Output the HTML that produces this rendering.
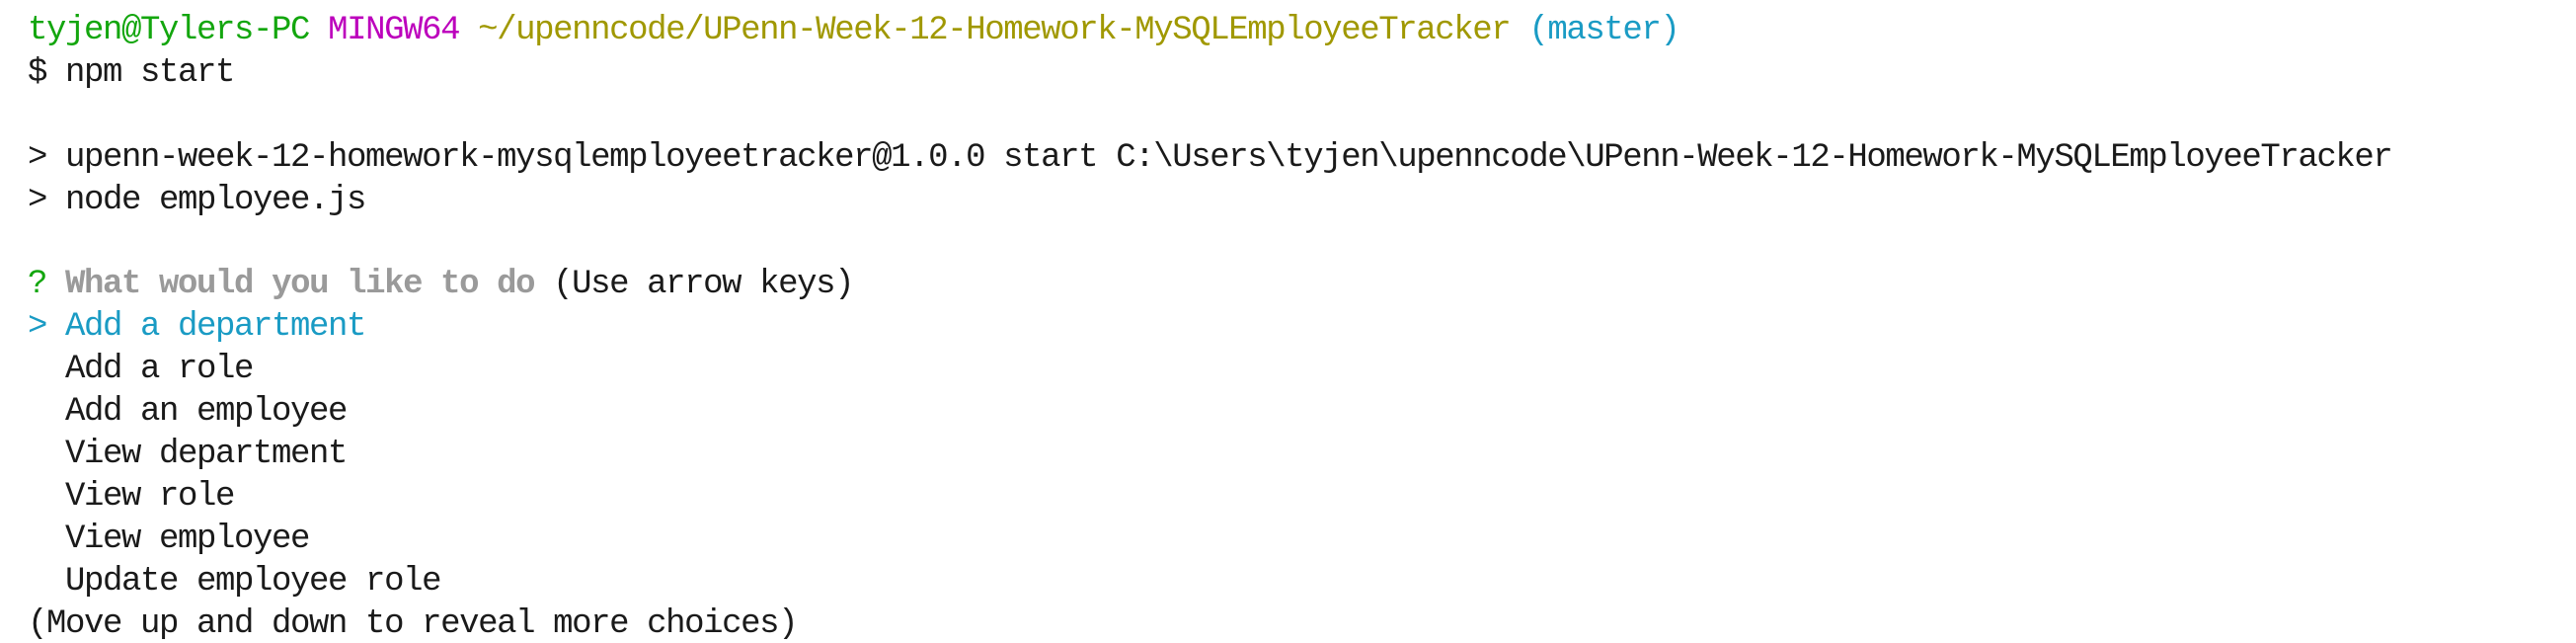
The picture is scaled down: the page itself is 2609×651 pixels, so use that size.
<!DOCTYPE html>
<html><head><meta charset="utf-8"><style>
html,body{margin:0;padding:0;background:#fff;width:2609px;height:651px;overflow:hidden}
pre{margin:0;padding:10px 0 0 28px;font-family:"Liberation Mono","DejaVu Sans Mono",monospace;font-size:34px;letter-spacing:-1.4px;line-height:42.9px;color:#1a1a1a}
.g{color:#13a60e}.m{color:#bc00bc}.y{color:#a09800}.c{color:#1a9bc4}.q{color:#9a9a9a;font-weight:bold}
</style></head><body><pre><span class="g">tyjen@Tylers-PC</span> <span class="m">MINGW64</span> <span class="y">~/upenncode/UPenn-Week-12-Homework-MySQLEmployeeTracker</span> <span class="c">(master)</span>
$ npm start

&gt; upenn-week-12-homework-mysqlemployeetracker@1.0.0 start C:\Users\tyjen\upenncode\UPenn-Week-12-Homework-MySQLEmployeeTracker
&gt; node employee.js

<span class="g">?</span> <span class="q">What would you like to do</span> (Use arrow keys)
<span class="c">&gt; Add a department</span>
  Add a role
  Add an employee
  View department
  View role
  View employee
  Update employee role
(Move up and down to reveal more choices)</pre></body></html>
